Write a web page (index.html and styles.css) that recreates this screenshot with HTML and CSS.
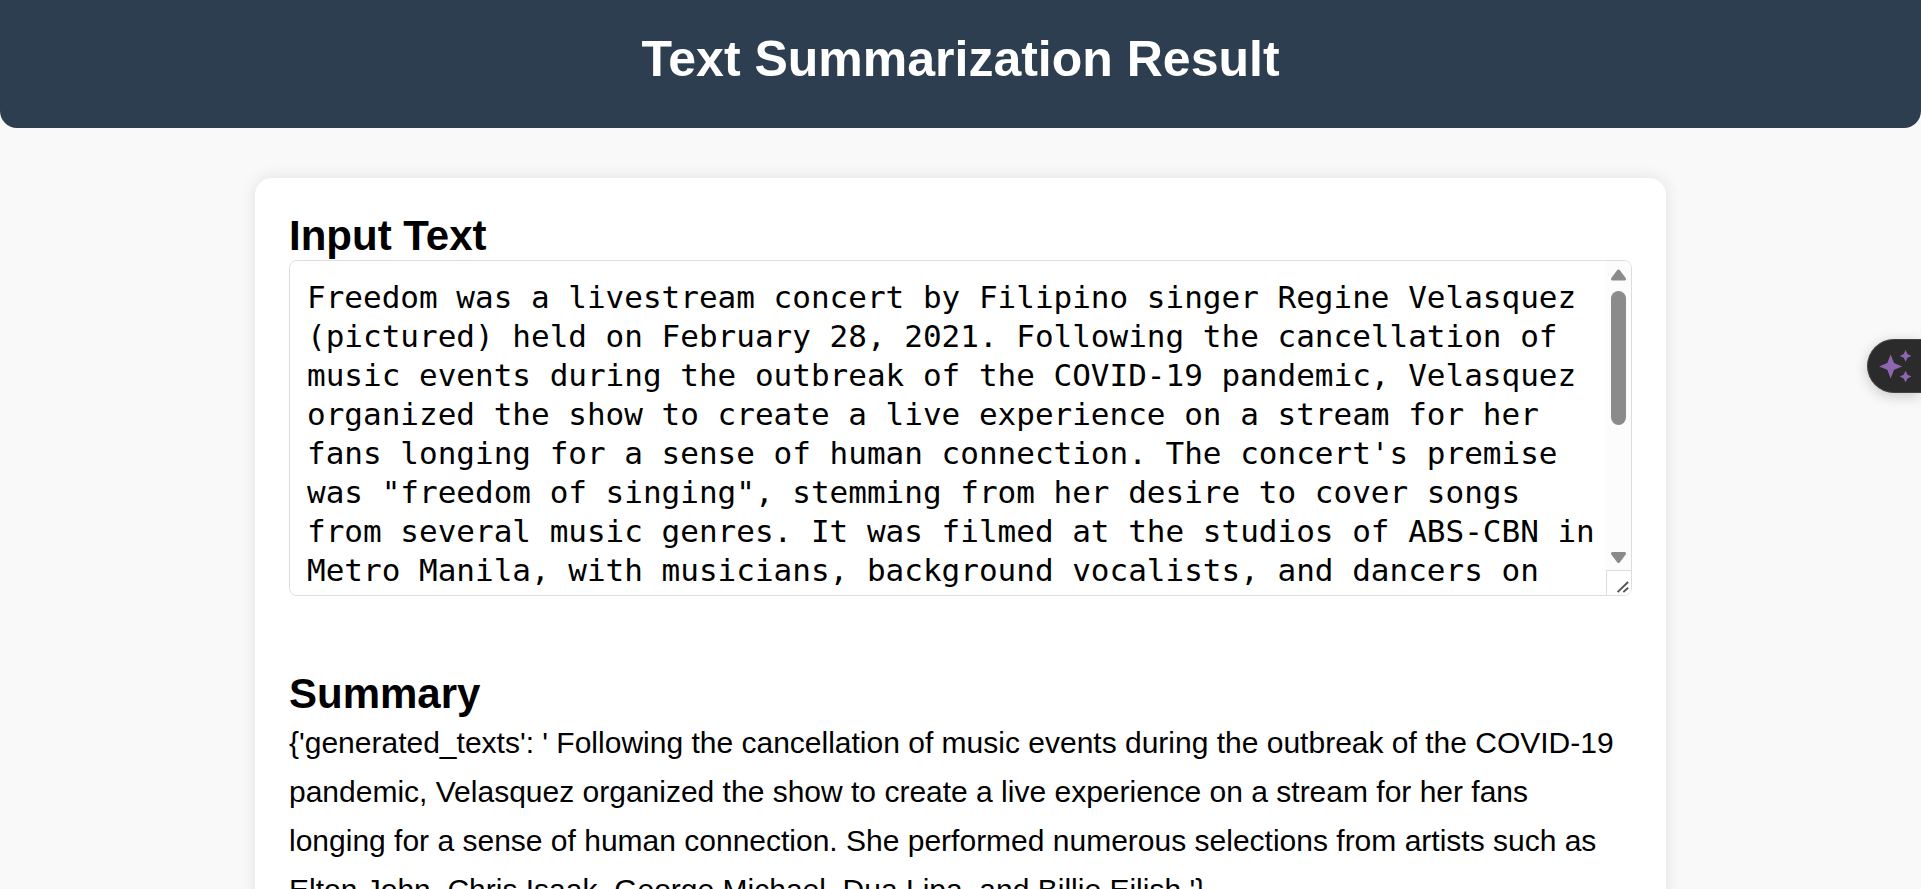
FILE: index.html
```html
<!DOCTYPE html>
<html lang="en">
<head>
<meta charset="utf-8">
<meta name="viewport" content="width=device-width, initial-scale=1">
<title>Text Summarization Result</title>
<link rel="stylesheet" href="styles.css">
</head>
<body>
<header class="banner">
  <h1 class="banner-title">Text Summarization Result</h1>
</header>
<main class="card">
  <section class="block">
    <h2 class="block-title"><label for="input-text">Input Text</label></h2>
    <div class="field">
      <textarea class="input-text" id="input-text" spellcheck="false">Freedom was a livestream concert by Filipino singer Regine Velasquez (pictured) held on February 28, 2021. Following the cancellation of music events during the outbreak of the COVID-19 pandemic, Velasquez organized the show to create a live experience on a stream for her fans longing for a sense of human connection. The concert's premise was "freedom of singing", stemming from her desire to cover songs from several music genres. It was filmed at the studios of ABS-CBN in Metro Manila, with musicians, background vocalists, and dancers on stage. She performed numerous selections from artists such as Elton John, Chris Isaak, George Michael, Dua Lipa, and Billie Eilish.</textarea>
      <div class="scrollbar" aria-hidden="true">
        <svg class="scroll-arrow" viewBox="0 0 25 25"><path d="M12.500 10L18.500 18H6.500Z"/></svg>
        <div class="scroll-track"><div class="scroll-thumb"></div></div>
        <svg class="scroll-arrow" viewBox="0 0 25 25"><path d="M12.500 16.500L18.500 8.500H6.500Z"/></svg>
        <svg class="resizer" viewBox="0 0 25 25"><path d="M11 22L22 11.500M17 22L22 17.500"/></svg>
      </div>
    </div>
  </section>
  <section class="block">
    <h2 class="block-title">Summary</h2>
    <p class="summary">{'generated_texts': ' Following the cancellation of music events during the outbreak of the COVID-19 pandemic, Velasquez organized the show to create a live experience on a stream for her fans longing for a sense of human connection. She performed numerous selections from artists such as Elton John, Chris Isaak, George Michael, Dua Lipa, and Billie Eilish.'}</p>
  </section>
</main>
<button class="assistant" type="button" aria-label="Open assistant">
  <svg class="assistant-icon" viewBox="0 0 54 54" aria-hidden="true">
    <path d="M23 15L26.500 24L35 27.500L26.500 31L23 40L19.500 31L11 27.500L19.500 24Z"/>
    <path d="M38.500 10.500L40.500 14.500L44.500 16.500L40.500 18.500L38.500 22.500L36.500 18.500L32.500 16.500L36.500 14.500Z"/>
    <path d="M38.500 32L40.500 36L44.500 38L40.500 40L38.500 44L36.500 40L32.500 38L36.500 36Z"/>
  </svg>
</button>
</body>
</html>
```
FILE: styles.css
```css
* {
  box-sizing: border-box;
}

html {
  overflow: hidden auto;
  scrollbar-width: none;
}

body {
  margin: 0;
  background: #f9f9f9;
  color: #000;
  font-family: Arial, "Liberation Sans", sans-serif;
  font-size: 30px;
}

.banner {
  padding: 31px 34px 40px;
  border-radius: 0 0 17px 17px;
  background: #2c3e50;
  color: #fff;
  text-align: center;
}

.banner-title {
  margin: 0;
  font-size: 50px;
  line-height: 57px;
}

.card {
  display: flex;
  flex-direction: column;
  gap: 74px;
  max-width: 1411px;
  margin: 50px auto;
  padding: 34px;
  border-radius: 17px;
  background: #fff;
  box-shadow: 0 0 17px rgba(0, 0, 0, 0.1);
}

.block-title {
  margin: 0;
  font-size: 42px;
  line-height: 48px;
}

.field {
  position: relative;
}

.input-text {
  display: block;
  width: 100%;
  height: 336px;
  padding: 17px 33px 17px 17px;
  border: 1px solid #ddd;
  border-radius: 8px;
  outline: none;
  background: #fff;
  color: #000;
  font-family: Consolas, "DejaVu Sans Mono", monospace;
  font-size: 31px;
  line-height: 39px;
  resize: none;
  scrollbar-width: none;
}

.scrollbar {
  position: absolute;
  top: 1px;
  right: 1px;
  bottom: 1px;
  display: flex;
  flex-direction: column;
  width: 25px;
  border-radius: 0 7px 7px 0;
  overflow: hidden;
  background: #fcfcfc;
}

.scroll-arrow {
  flex: none;
  height: 25px;
  fill: #8b8b8b;
  stroke: #8b8b8b;
  stroke-width: 3px;
  stroke-linejoin: round;
}

.scroll-track {
  flex: 1;
  padding: 5px;
}

.scroll-thumb {
  height: 134px;
  border-radius: 8px;
  background: #8b8b8b;
}

.resizer {
  flex: none;
  height: 25px;
  border: solid #ddd;
  border-width: 1px 0 0 1px;
  background: #fff;
  fill: none;
  stroke: #555;
  stroke-width: 2px;
}

.summary {
  margin: 0;
  line-height: 49px;
}

.assistant {
  position: fixed;
  top: 339px;
  right: 0;
  width: 54px;
  height: 54px;
  padding: 0;
  border: 1px solid #444;
  border-right: 0;
  border-radius: 27px 0 0 27px;
  background: #2b2b2b;
  box-shadow: 0 3px 14px rgba(0, 0, 0, 0.2);
}

.assistant-icon {
  display: block;
  width: 100%;
  height: 100%;
  fill: #9065b0;
}
```
